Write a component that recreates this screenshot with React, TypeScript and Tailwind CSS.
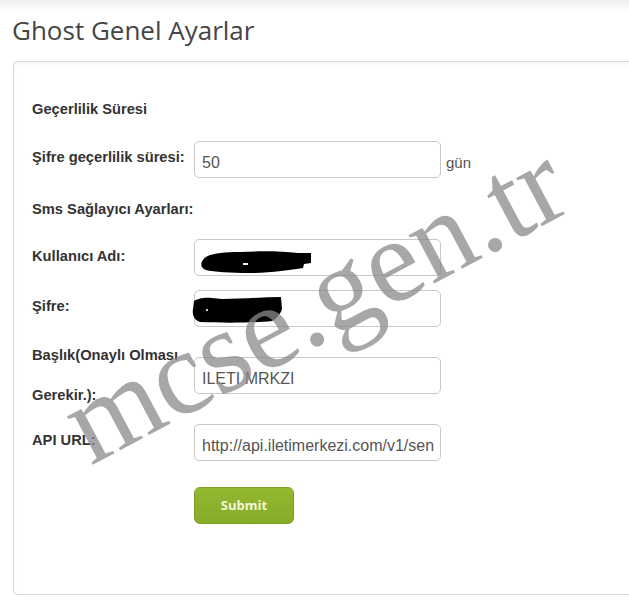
import React from "react";

const labelCls =
  "w-[162px] shrink-0 text-[14.7px] leading-[18px] font-bold text-[#333]";
const inputCls =
  "relative w-[247px] h-[37px] shrink-0 rounded-[5px] border border-[#c8c8c8] bg-white pl-[7px] pr-[6px] pt-[7px] flex items-center text-[16px] text-[#555] whitespace-nowrap";

function Blob1() {
  return (
    <svg className="absolute left-[5px] top-[9px]" width="112" height="26" viewBox="0 0 112 26">
      <path
        d="M3 11 C6 5 20 3 40 3 C60 2 80 2 98 4 L111 4 L111 14 L104 15 L103 19 C90 21 70 24 50 24 C30 24 14 23 6 21 C1 19 0 15 3 11 Z"
        fill="#000"
      />
      <rect x="43" y="14" width="5" height="2" fill="#eee" />
    </svg>
  );
}

function Blob2() {
  return (
    <svg className="absolute left-[-3px] top-[4px]" width="95" height="30" viewBox="0 0 95 30">
      <path
        d="M2 6 C5 4 12 2 20 3 L30 4 C50 4 70 2 89 2 L90 14 C88 20 84 24 80 26 C60 28 30 28 8 27 C2 25 0 20 1 14 Z"
        fill="#000"
      />
      <rect x="14" y="14" width="2" height="2" fill="#ccc" />
    </svg>
  );
}

export default function App() {
  return (
    <div
      className="relative w-full min-h-[611px] overflow-hidden bg-[linear-gradient(#efefef,#ffffff_12px)]"
      style={{ fontFamily: '"Liberation Sans", Arial, sans-serif' }}
    >
      <div
        className="pl-[12px] pt-[14px] text-[26px] leading-[32px] text-[#454545]"
        style={{ fontFamily: '"Open Sans", sans-serif' }}
      >
        Ghost Genel Ayarlar
      </div>

      <div className="ml-[13px] mt-[15px] w-[660px] rounded-[4px] border border-[#d9d9d9] bg-white pl-[18px] pt-[37px] pb-[70px] shadow-[inset_0_3px_4px_rgba(0,0,0,0.03)]">
        <div className="text-[14.7px] leading-[20px] font-bold text-[#333]">Geçerlilik Süresi</div>

        <div className="mt-[22px] flex items-start">
          <div className={`${labelCls} pt-[7px]`}>Şifre geçerlilik süresi:</div>
          <div className={inputCls}>
            <span className="min-w-0 overflow-hidden">50</span>
          </div>
          <div className="pl-[5px] pt-[14px] text-[15px] leading-[16px] text-[#555]">gün</div>
        </div>

        <div className="mt-[21px] text-[14.7px] leading-[20px] font-bold text-[#333]">
          Sms Sağlayıcı Ayarları:
        </div>

        <div className="mt-[20px] flex items-start">
          <div className={`${labelCls} pt-[8px]`}>Kullanıcı Adı:</div>
          <div className={inputCls}>
            <Blob1 />
          </div>
        </div>

        <div className="mt-[14px] flex items-start">
          <div className={`${labelCls} pt-[7px]`}>Şifre:</div>
          <div className={inputCls}>
            <Blob2 />
          </div>
        </div>

        <div className="mt-[30px] flex h-[37px] items-start">
          <div className="w-[162px] shrink-0 -mt-[22px] text-[14.7px] leading-[40px] font-bold text-[#333]">
            Başlık(Onaylı Olması
            <br />
            Gerekir.):
          </div>
          <div className={inputCls}>
            <span className="min-w-0 overflow-hidden">ILETI MRKZI</span>
          </div>
        </div>

        <div className="mt-[30px] flex items-start">
          <div className={`${labelCls} pt-[7px]`}>API URL:</div>
          <div className={inputCls}>
            <span className="min-w-0 overflow-hidden">http://api.iletimerkezi.com/v1/send-sms</span>
          </div>
        </div>

        <div className="mt-[26px] pl-[162px]">
          <button
            className="h-[37px] w-[100px] rounded-[6px] border border-[#7d9f24] bg-[linear-gradient(#93b832,#86ab26)] text-[13px] font-bold text-[#f3f6da]"
            style={{ fontFamily: '"Open Sans", sans-serif' }}
          >
            Submit
          </button>
        </div>
      </div>

      <span
        className="pointer-events-none absolute left-[91px] top-[367px] origin-[0_100px] -rotate-[28deg] whitespace-nowrap text-[119px] leading-[119px] text-[#8a8a8a] opacity-75"
        style={{ fontFamily: '"Liberation Serif", "Times New Roman", serif' }}
      >
        mcse.gen.tr
      </span>
    </div>
  );
}
